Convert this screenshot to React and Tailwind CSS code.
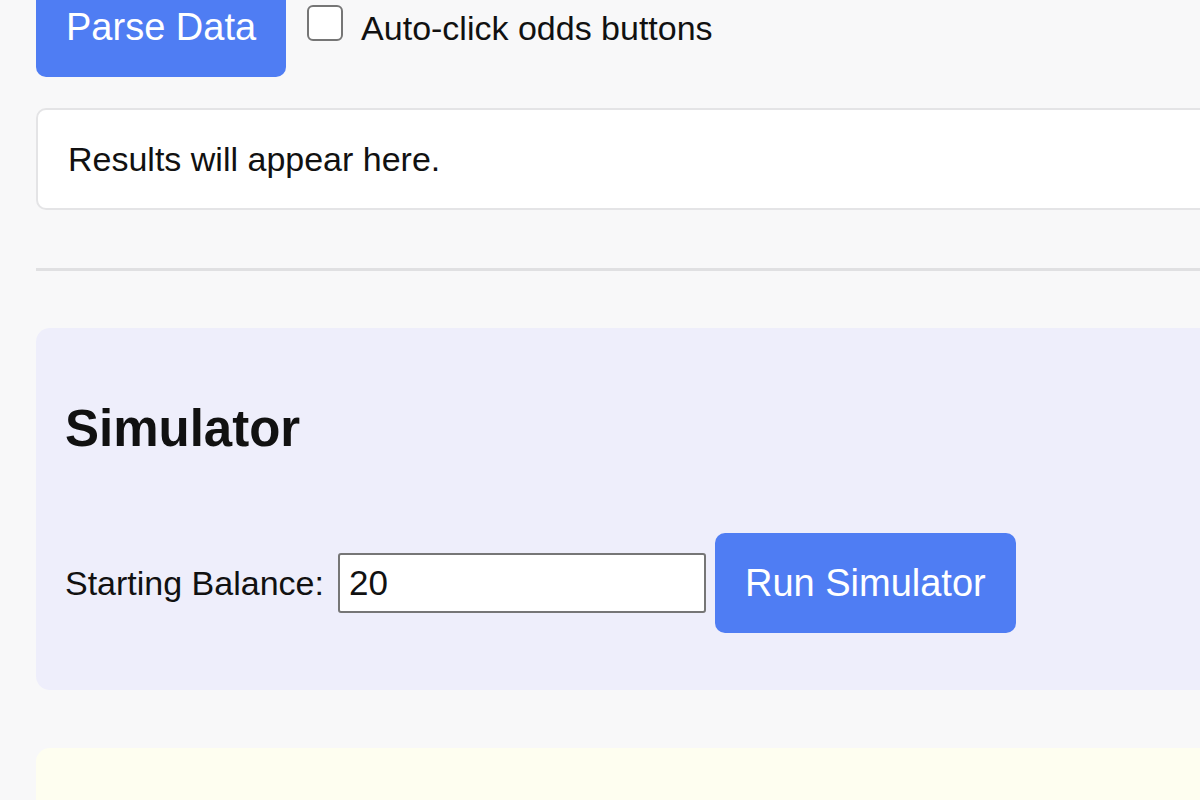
import { useState } from 'react'

const App = () => {
    const [autoClick, setAutoClick] = useState(false)
    const [balance, setBalance] = useState('20')

    return (
    <div className="h-screen bg-[#f8f8f9] overflow-hidden text-[#111] font-['Liberation_Sans',Arial,sans-serif]">
        <div className="w-[1400px] pl-[36px] -mt-[23px]">

            {/* parse row */}
            <div className="flex items-start">
                <button className="h-[100px] px-[30px] rounded-[10px] bg-[#4f7df3] text-white text-[38px] leading-[44px]">Parse Data</button>
                <label className="flex items-start ml-[21px]">
                    <input
                        type="checkbox"
                        checked={autoClick}
                        onChange={() => setAutoClick(!autoClick)}
                        className="appearance-none mt-[28px] w-[36px] h-[36px] border-2 border-[#767676] rounded-[6px] bg-white checked:bg-[#4f7df3]"
                    />
                    <span className="ml-[18px] mt-[31px] text-[34px] leading-[40px]">Auto-click odds buttons</span>
                </label>
            </div>

            {/* results */}
            <div className="mt-[31px] h-[102px] flex items-center px-[30px] bg-white border-2 border-[#e4e4e6] rounded-[10px] text-[34px]">
                Results will appear here.
            </div>

            <div className="mt-[58px] h-[3px] bg-[#e0e0e2]"></div>

            {/* simulator */}
            <div className="mt-[57px] bg-[#eeeefb] rounded-[14px] px-[29px] pt-[71px] pb-[57px]">
                <h2 className="text-[51px] leading-[60px] font-bold">Simulator</h2>
                <div className="mt-[74px] flex items-center">
                    <span className="text-[34px] leading-[40px]">Starting Balance:</span>
                    <input
                        value={balance}
                        onChange={e => setBalance(e.target.value)}
                        className="ml-[14px] w-[368px] h-[60px] px-[9px] bg-white border-2 border-[#767676] rounded-[3px] text-[35px] outline-none"
                    />
                    <button className="ml-[9px] h-[100px] px-[30px] rounded-[10px] bg-[#4f7df3] text-white text-[38px] leading-[44px]">Run Simulator</button>
                </div>
            </div>

            {/* output */}
            <div className="mt-[58px] h-[200px] bg-[#fefef0] rounded-[14px]"></div>
        </div>
    </div>
    )
}

export default App
